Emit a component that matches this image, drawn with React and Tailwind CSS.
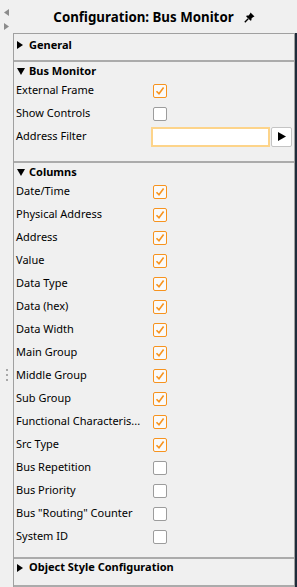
import React from 'react';

function Check({ on }) {
  return (
    <div className={`w-[14px] h-[14px] rounded-[2px] border flex items-center justify-center ${on ? 'border-[#f7931e] bg-[#fafafa]' : 'border-[#9c9c9c] bg-white'}`}>
      {on && (
        <svg width="10" height="10" viewBox="0 0 10 10">
          <polyline points="1.5,5.2 4,7.8 8.6,1.6" fill="none" stroke="#f7931e" strokeWidth="1.6" />
        </svg>
      )}
    </div>
  );
}

function Arrow({ open }) {
  return (
    <span className="w-[12px] flex items-center">
      {open ? (
        <svg width="8" height="7" viewBox="0 0 8 7">
          <polygon points="0,0 8,0 4,7" fill="#000" />
        </svg>
      ) : (
        <svg width="6" height="8" viewBox="0 0 6 8">
          <polygon points="0,0 6,4 0,8" fill="#000" />
        </svg>
      )}
    </span>
  );
}

function Row({ label, on }) {
  return (
    <div className="h-[23px] flex items-center">
      <span className="w-[139px] pl-[2px] pr-1 truncate">{label}</span>
      <Check on={on} />
    </div>
  );
}

function Header({ title, open, h = 'h-[15px]' }) {
  return (
    <div className={`${h} flex items-center pl-[3px] font-bold`}>
      <Arrow open={open} />
      <span>{title}</span>
    </div>
  );
}

function Sep() {
  return <div className="h-[2px] bg-[#ababab]" />;
}

const columns = [
  ['Date/Time', true],
  ['Physical Address', true],
  ['Address', true],
  ['Value', true],
  ['Data Type', true],
  ['Data (hex)', true],
  ['Data Width', true],
  ['Main Group', true],
  ['Middle Group', true],
  ['Sub Group', true],
  ['Functional Characteris...', true],
  ['Src Type', true],
  ['Bus Repetition', false],
  ['Bus Priority', false],
  ['Bus "Routing" Counter', false],
  ['System ID', false],
];

export default function App() {
  return (
    <div className="w-[297px] h-[587px] bg-[#f0f0f0] flex overflow-hidden text-[11px] text-black font-['Noto_Sans',sans-serif]">
      {/* side strip */}
      <div className="w-[13px] flex flex-col items-center shrink-0">
        <svg width="5" height="7" viewBox="0 0 5 7" className="mt-[9px] -ml-[1px]">
          <polygon points="5,0 0,3.5 5,7" fill="#8c8c8c" />
        </svg>
        <svg width="5" height="7" viewBox="0 0 5 7" className="mt-[7px]">
          <polygon points="0,0 5,3.5 0,7" fill="#8c8c8c" />
        </svg>
        <div className="mt-[339px] flex flex-col gap-[3px]">
          <div className="w-[2px] h-[2px] bg-[#a8a8a8]" />
          <div className="w-[2px] h-[2px] bg-[#a8a8a8]" />
          <div className="w-[2px] h-[2px] bg-[#a8a8a8]" />
        </div>
      </div>

      <div className="flex-1 flex flex-col">
        {/* title */}
        <div className="h-[33px] flex items-center justify-center gap-[10px] pt-[2px] pr-[2px]">
          <span className="text-[13.3px] font-bold">Configuration: Bus Monitor</span>
          <svg width="11" height="11" viewBox="0 0 11 11">
            <path d="M6.5 0.5 L10.5 4.5 L9.3 5 L7.6 6.3 L7.4 8.3 L6.6 8.8 L2.2 4.4 L2.7 3.6 L4.7 3.4 L6 1.7 Z" fill="#000" />
            <line x1="4.2" y1="6.8" x2="0.8" y2="10.2" stroke="#000" strokeWidth="1.4" />
          </svg>
        </div>

        {/* panel */}
        <div className="flex-1 flex">
          <div className="flex-1 border-l border-t border-r border-[#a0a0a0] flex flex-col">
            <div className="pt-[1px] pb-[5px]">
              <Header title="General" h="h-[20px]" />
            </div>
            <Sep />

            <div className="pt-[2px] pb-[13px]">
              <Header title="Bus Monitor" open />
              <Row label="External Frame" on />
              <Row label="Show Controls" on={false} />
              <div className="h-[23px] flex items-center">
                <span className="w-[137px] pl-[2px]">Address Filter</span>
                <div className="w-[119px] h-[20px] border-2 border-[#fdd48a] bg-white" />
                <div className="ml-[1px] w-[21px] h-[20px] border border-[#c4c4c4] rounded-[2px] bg-white flex items-center justify-center">
                  <svg width="8" height="9" viewBox="0 0 8 9">
                    <polygon points="0,0 8,4.5 0,9" fill="#000" />
                  </svg>
                </div>
              </div>
            </div>
            <Sep />

            <div className="pt-[2px] pb-[9px]">
              <Header title="Columns" open />
              {columns.map(([label, on]) => (
                <Row key={label} label={label} on={on} />
              ))}
            </div>
            <Sep />

            <div className="pb-[9px]">
              <Header title="Object Style Configuration" h="h-[17px]" />
            </div>
            <Sep />
          </div>
          <div className="w-[2px] bg-[#1e2b3a]" />
        </div>
      </div>
    </div>
  );
}
